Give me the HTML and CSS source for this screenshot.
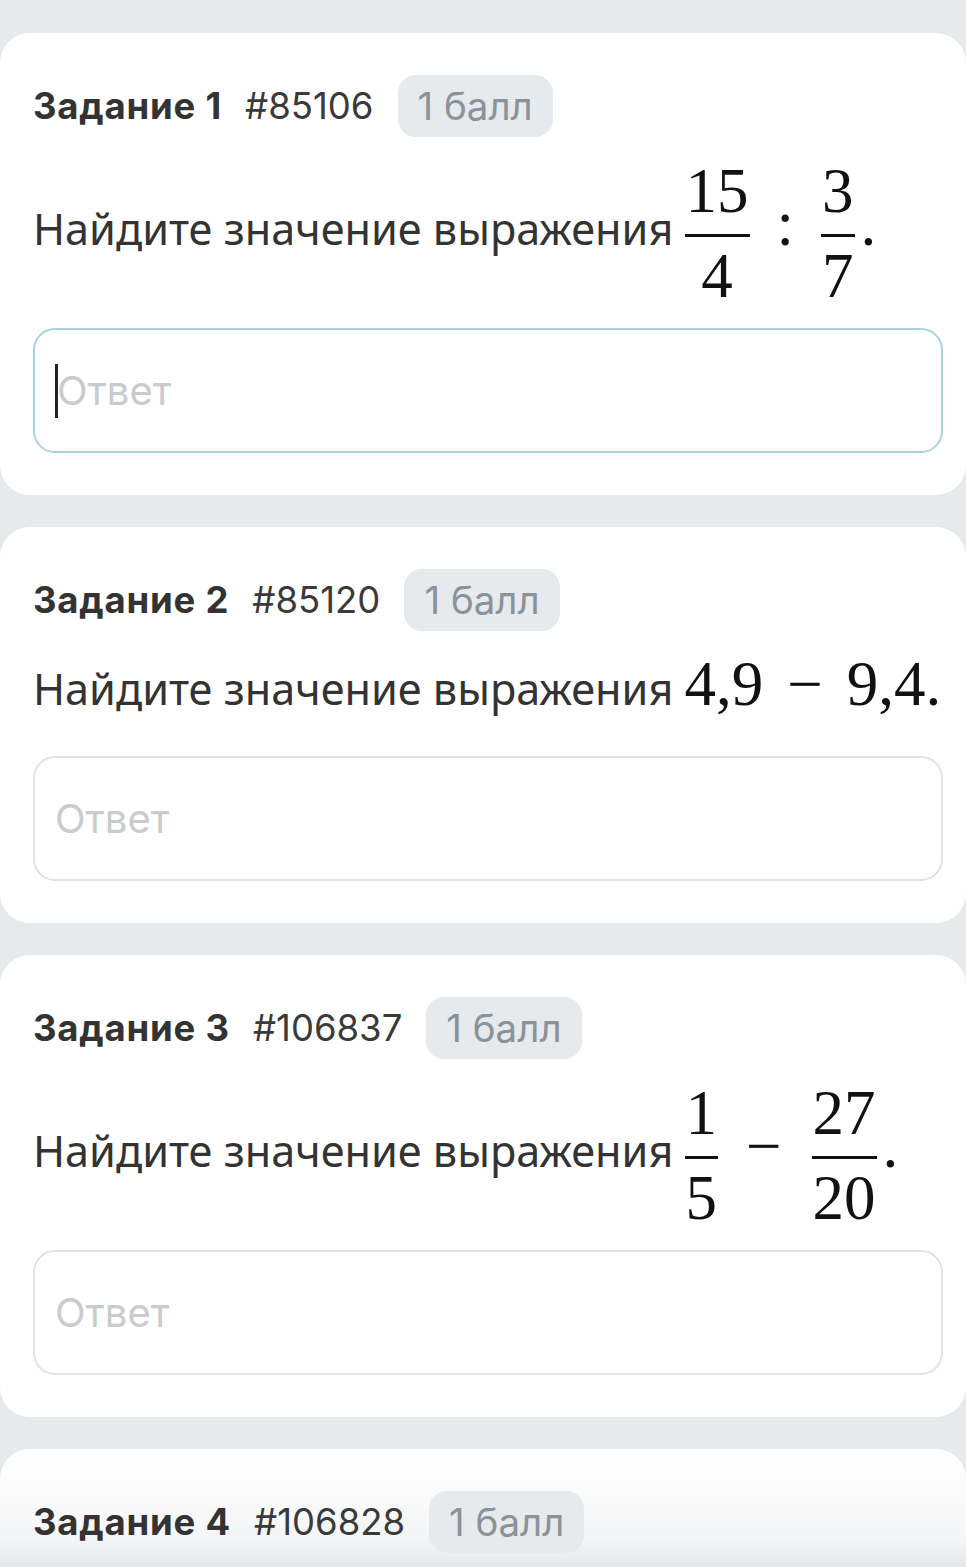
FILE: index.html
```html
<!DOCTYPE html>
<html lang="ru">
<head>
    <meta charset="UTF-8">
    <meta name="viewport" content="width=device-width, initial-scale=1.0">
    <title>Задания</title>
    <link rel="stylesheet" href="styles.css">
</head>
<body>
    <div class="task">
        <div class="head">
            <span class="num">Задание 1</span>
            <span class="id">#85106</span>
            <span class="score">1 балл</span>
        </div>
        <p class="question">Найдите значение выражения
            <span class="math"><span class="frac"><span class="top">15</span><span class="bot">4</span></span><span class="rel">:</span><span class="frac"><span class="top">3</span><span class="bot">7</span></span><span class="dot">.</span></span>
        </p>
        <div class="answer focus"><span class="caret"></span><span class="ph">Ответ</span></div>
    </div>

    <div class="task">
        <div class="head">
            <span class="num">Задание 2</span>
            <span class="id">#85120</span>
            <span class="score">1 балл</span>
        </div>
        <p class="question">Найдите значение выражения <span class="math">4,9<span class="op">−</span>9,4.</span></p>
        <div class="answer"><span class="ph">Ответ</span></div>
    </div>

    <div class="task">
        <div class="head">
            <span class="num">Задание 3</span>
            <span class="id">#106837</span>
            <span class="score">1 балл</span>
        </div>
        <p class="question">Найдите значение выражения
            <span class="math"><span class="frac"><span class="top">1</span><span class="bot">5</span></span><span class="op wide">−</span><span class="frac"><span class="top">27</span><span class="bot">20</span></span><span class="dot">.</span></span>
        </p>
        <div class="answer"><span class="ph">Ответ</span></div>
    </div>

    <div class="task last">
        <div class="head">
            <span class="num">Задание 4</span>
            <span class="id">#106828</span>
            <span class="score">1 балл</span>
        </div>
    </div>
</body>
</html>
```

FILE: styles.css
```css
body {
    margin: 0;
    padding-top: 33px;
    background-color: #e6eaed;
    font-family: "Noto Sans", sans-serif;
    color: #333;
}
.task {
    background-color: #fff;
    border-radius: 30px;
    padding: 42px 23px 42px 33px;
    margin-bottom: 32px;
}
.task.last {
    height: 200px;
    margin-bottom: 0;
    background: linear-gradient(to bottom, #fff 0, #fbfbfc 40px, #f4f5f6 90px, #e3e6e9 120px, #e3e6e9 200px);
}
/* строка с номером задания */
.head {
    display: flex;
    align-items: center;
    height: 62px;
    font-family: Inter, sans-serif;
    font-size: 36.5px;
}
.num {
    font-weight: 700;
    color: #333;
    letter-spacing: 0.8px;
}
.id {
    margin-left: 23px;
    color: #3a3a3a;
}
.score {
    margin-left: 24px;
    height: 62px;
    line-height: 62px;
    padding: 0 20px;
    border-radius: 18px;
    background-color: #e6eaed;
    color: #8b9299;
    font-size: 38.5px;
}
.question {
    margin: 18px 0 27px;
    font-size: 43.2px;
    line-height: 80px;
    color: #333;
    white-space: nowrap;
}
/* формулы */
.math {
    font-family: "Liberation Serif", serif;
    font-size: 63px;
    line-height: 1;
    color: #111;
}
.math .op {
    margin: 0 24px;
}
.math .op.wide {
    margin: 0 30px 0 28px;
}
.math .rel {
    margin: 0 27px;
}
.math .dot {
    margin-left: 6px;
}
.frac {
    display: inline-flex;
    flex-direction: column;
    align-items: stretch;
    vertical-align: 33px;
    text-align: center;
}
.frac .top {
    line-height: 63px;
    padding: 5px 1px 11px;
    border-bottom: 3px solid #111;
}
.frac .bot {
    line-height: 50px;
    padding-top: 14px;
}
/* поле ответа */
.answer {
    box-sizing: border-box;
    display: flex;
    align-items: center;
    height: 125px;
    border: 2px solid #dfe3e6;
    border-radius: 22px;
    padding-left: 20px;
}
.answer.focus {
    border-color: #a8d3df;
}
.ph {
    font-family: Inter, sans-serif;
    font-size: 40px;
    color: #c9cbcd;
}
.caret {
    width: 3px;
    height: 54px;
    background-color: #222;
    margin-right: -1px;
}
```
